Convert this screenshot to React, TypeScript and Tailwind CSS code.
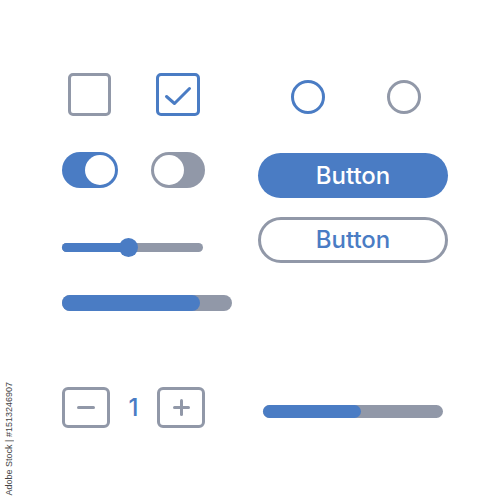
import React from "react";

const BLUE = "#4a7cc4";

export default function App() {
  return (
    <div className="relative w-[500px] h-[500px] bg-white flex overflow-hidden" style={{ fontFamily: 'Inter, "Open Sans", sans-serif' }}>
      {/* Left column */}
      <div className="flex flex-col pl-[62px] pt-[73px] w-[258px]">
        <div className="flex gap-[45px] pl-[6px]">
          <div className="w-[43px] h-[43px] rounded-[5px] border-[3px] border-[#9198a8]" />
          <div className="w-[44px] h-[43px] rounded-[5px] border-[3px] border-[#4a7cc4] relative">
            <svg width="44" height="43" viewBox="0 0 44 43" className="absolute -left-[3px] -top-[3px]">
              <polyline points="10.5,23.5 18.5,30.5 33.5,15.5" fill="none" stroke={BLUE} strokeWidth="3" strokeLinecap="round" strokeLinejoin="round" />
            </svg>
          </div>
        </div>
        <div className="flex gap-[33px] mt-[36px]">
          <div className="w-[56px] h-[36px] rounded-full bg-[#4a7cc4] p-[3px] flex justify-end">
            <div className="w-[30px] h-[30px] rounded-full bg-white" />
          </div>
          <div className="w-[54px] h-[36px] rounded-full bg-[#9198a8] p-[3px] flex justify-start">
            <div className="w-[30px] h-[30px] rounded-full bg-white" />
          </div>
        </div>
        <div className="relative mt-[50px] w-[141px] h-[19px] flex items-center">
          <div className="w-full h-[9px] rounded-full bg-[#9198a8] flex">
            <div className="w-[67px] h-full rounded-l-full bg-[#4a7cc4]" />
          </div>
          <div className="absolute left-[57px] top-0 w-[19px] h-[19px] rounded-full bg-[#4a7cc4]" />
        </div>
        <div className="mt-[38px] w-[170px] h-[16px] rounded-full bg-[#9198a8] flex">
          <div className="w-[138px] h-full rounded-full bg-[#4a7cc4]" />
        </div>
        <div className="mt-[76px] flex items-center w-[143px] justify-between">
          <div className="w-[48px] h-[41px] rounded-[6px] border-[3px] border-[#9198a8] flex items-center justify-center">
            <div className="w-[18px] h-[3px] rounded-full bg-[#9198a8]" />
          </div>
          <span className="text-[24px] leading-none font-medium text-[#4a7cc4]">1</span>
          <div className="w-[48px] h-[41px] rounded-[6px] border-[3px] border-[#9198a8] flex items-center justify-center relative">
            <div className="w-[17px] h-[3px] rounded-full bg-[#9198a8]" />
            <div className="absolute w-[3px] h-[17px] rounded-full bg-[#9198a8]" />
          </div>
        </div>
      </div>

      {/* Right column */}
      <div className="flex flex-col pt-[80px] w-[190px]">
        <div className="flex gap-[62px] pl-[33px]">
          <div className="w-[34px] h-[34px] rounded-full border-[3px] border-[#4a7cc4]" />
          <div className="w-[34px] h-[34px] rounded-full border-[3px] border-[#9198a8]" />
        </div>
        <div className="mt-[39px] h-[45px] w-[190px] rounded-full bg-[#4a7cc4] flex items-center justify-center">
          <span className="text-white text-[24px] font-medium leading-none">Button</span>
        </div>
        <div className="mt-[19px] h-[46px] w-[190px] rounded-full border-[3px] border-[#9198a8] flex items-center justify-center">
          <span className="text-[#4a7cc4] text-[24px] font-medium leading-none">Button</span>
        </div>
        <div className="mt-[142px] ml-[5px] w-[180px] h-[13px] rounded-full bg-[#9198a8] flex">
          <div className="w-[98px] h-full rounded-full bg-[#4a7cc4]" />
        </div>
      </div>

      <div className="absolute left-[5px] bottom-[5px] [writing-mode:vertical-rl] rotate-180 text-[9px] leading-none text-[#444]" style={{ fontFamily: '"Liberation Sans", sans-serif' }}>
        Adobe Stock | #1513246907
      </div>
    </div>
  );
}
